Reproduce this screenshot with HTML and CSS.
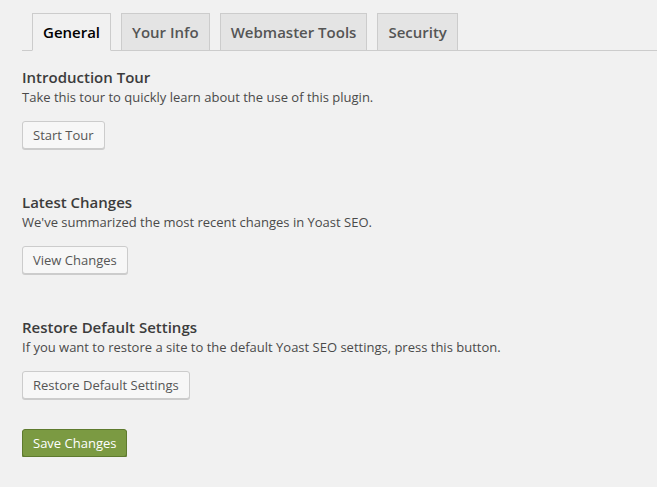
FILE: index.html
```html
<!DOCTYPE html>
<html>
<head>
<meta charset="utf-8">
<link rel="stylesheet" href="styles.css">
</head>
<body>
<div class="wrap">
  <nav class="tabs">
    <a class="tab active">General</a>
    <a class="tab">Your Info</a>
    <a class="tab">Webmaster Tools</a>
    <a class="tab">Security</a>
  </nav>
  <section class="section">
    <h2 class="title">Introduction Tour</h2>
    <p class="desc">Take this tour to quickly learn about the use of this plugin.</p>
    <button class="btn">Start Tour</button>
  </section>
  <section class="section">
    <h2 class="title">Latest Changes</h2>
    <p class="desc">We've summarized the most recent changes in Yoast SEO.</p>
    <button class="btn">View Changes</button>
  </section>
  <section class="section">
    <h2 class="title">Restore Default Settings</h2>
    <p class="desc">If you want to restore a site to the default Yoast SEO settings, press this button.</p>
    <button class="btn">Restore Default Settings</button>
  </section>
  <div class="submit">
    <button class="btn primary">Save Changes</button>
  </div>
</div>
</body>
</html>
```

FILE: styles.css
```css
html, body {
  margin: 0;
  padding: 0;
  background: #f1f1f1;
}
body {
  font-family: "Open Sans", "Liberation Sans", sans-serif;
  font-size: 13px;
  color: #444;
}
.wrap {
  padding: 13px 0 0 22px;
}
.tabs {
  display: flex;
  align-items: flex-end;
  gap: 10px;
  padding-left: 10px;
  border-bottom: 1px solid #ccc;
}
.tab {
  display: block;
  margin-bottom: -1px;
  padding: 6px 10px;
  border: 1px solid #ccc;
  background: #e4e4e4;
  color: #555;
  font-size: 15px;
  line-height: 24px;
  font-weight: 600;
  text-decoration: none;
}
.tab.active {
  background: #f1f1f1;
  color: #000;
  border-bottom-color: #f1f1f1;
}
.section {
  padding-top: 16px;
  margin-bottom: 27px;
}
.title {
  margin: 0;
  font-size: 15px;
  line-height: 20px;
  font-weight: 600;
  color: #3c3c3c;
}
.desc {
  margin: 0 0 14px;
  line-height: 20px;
  color: #4a4a4a;
}
.btn {
  display: block;
  height: 28px;
  margin: 0;
  padding: 0 10px 1px;
  font-family: inherit;
  font-size: 13px;
  line-height: 26px;
  color: #555;
  background: #f7f7f7;
  border: 1px solid #ccc;
  border-radius: 3px;
  box-shadow: 0 1px 0 #ccc;
  box-sizing: border-box;
}
.submit {
  padding-top: 3px;
}
.btn.primary {
  background: #7b9a42;
  border-color: #5e7a2e;
  color: #fff;
  box-shadow: 0 1px 0 #5e7a2e;
}
```
